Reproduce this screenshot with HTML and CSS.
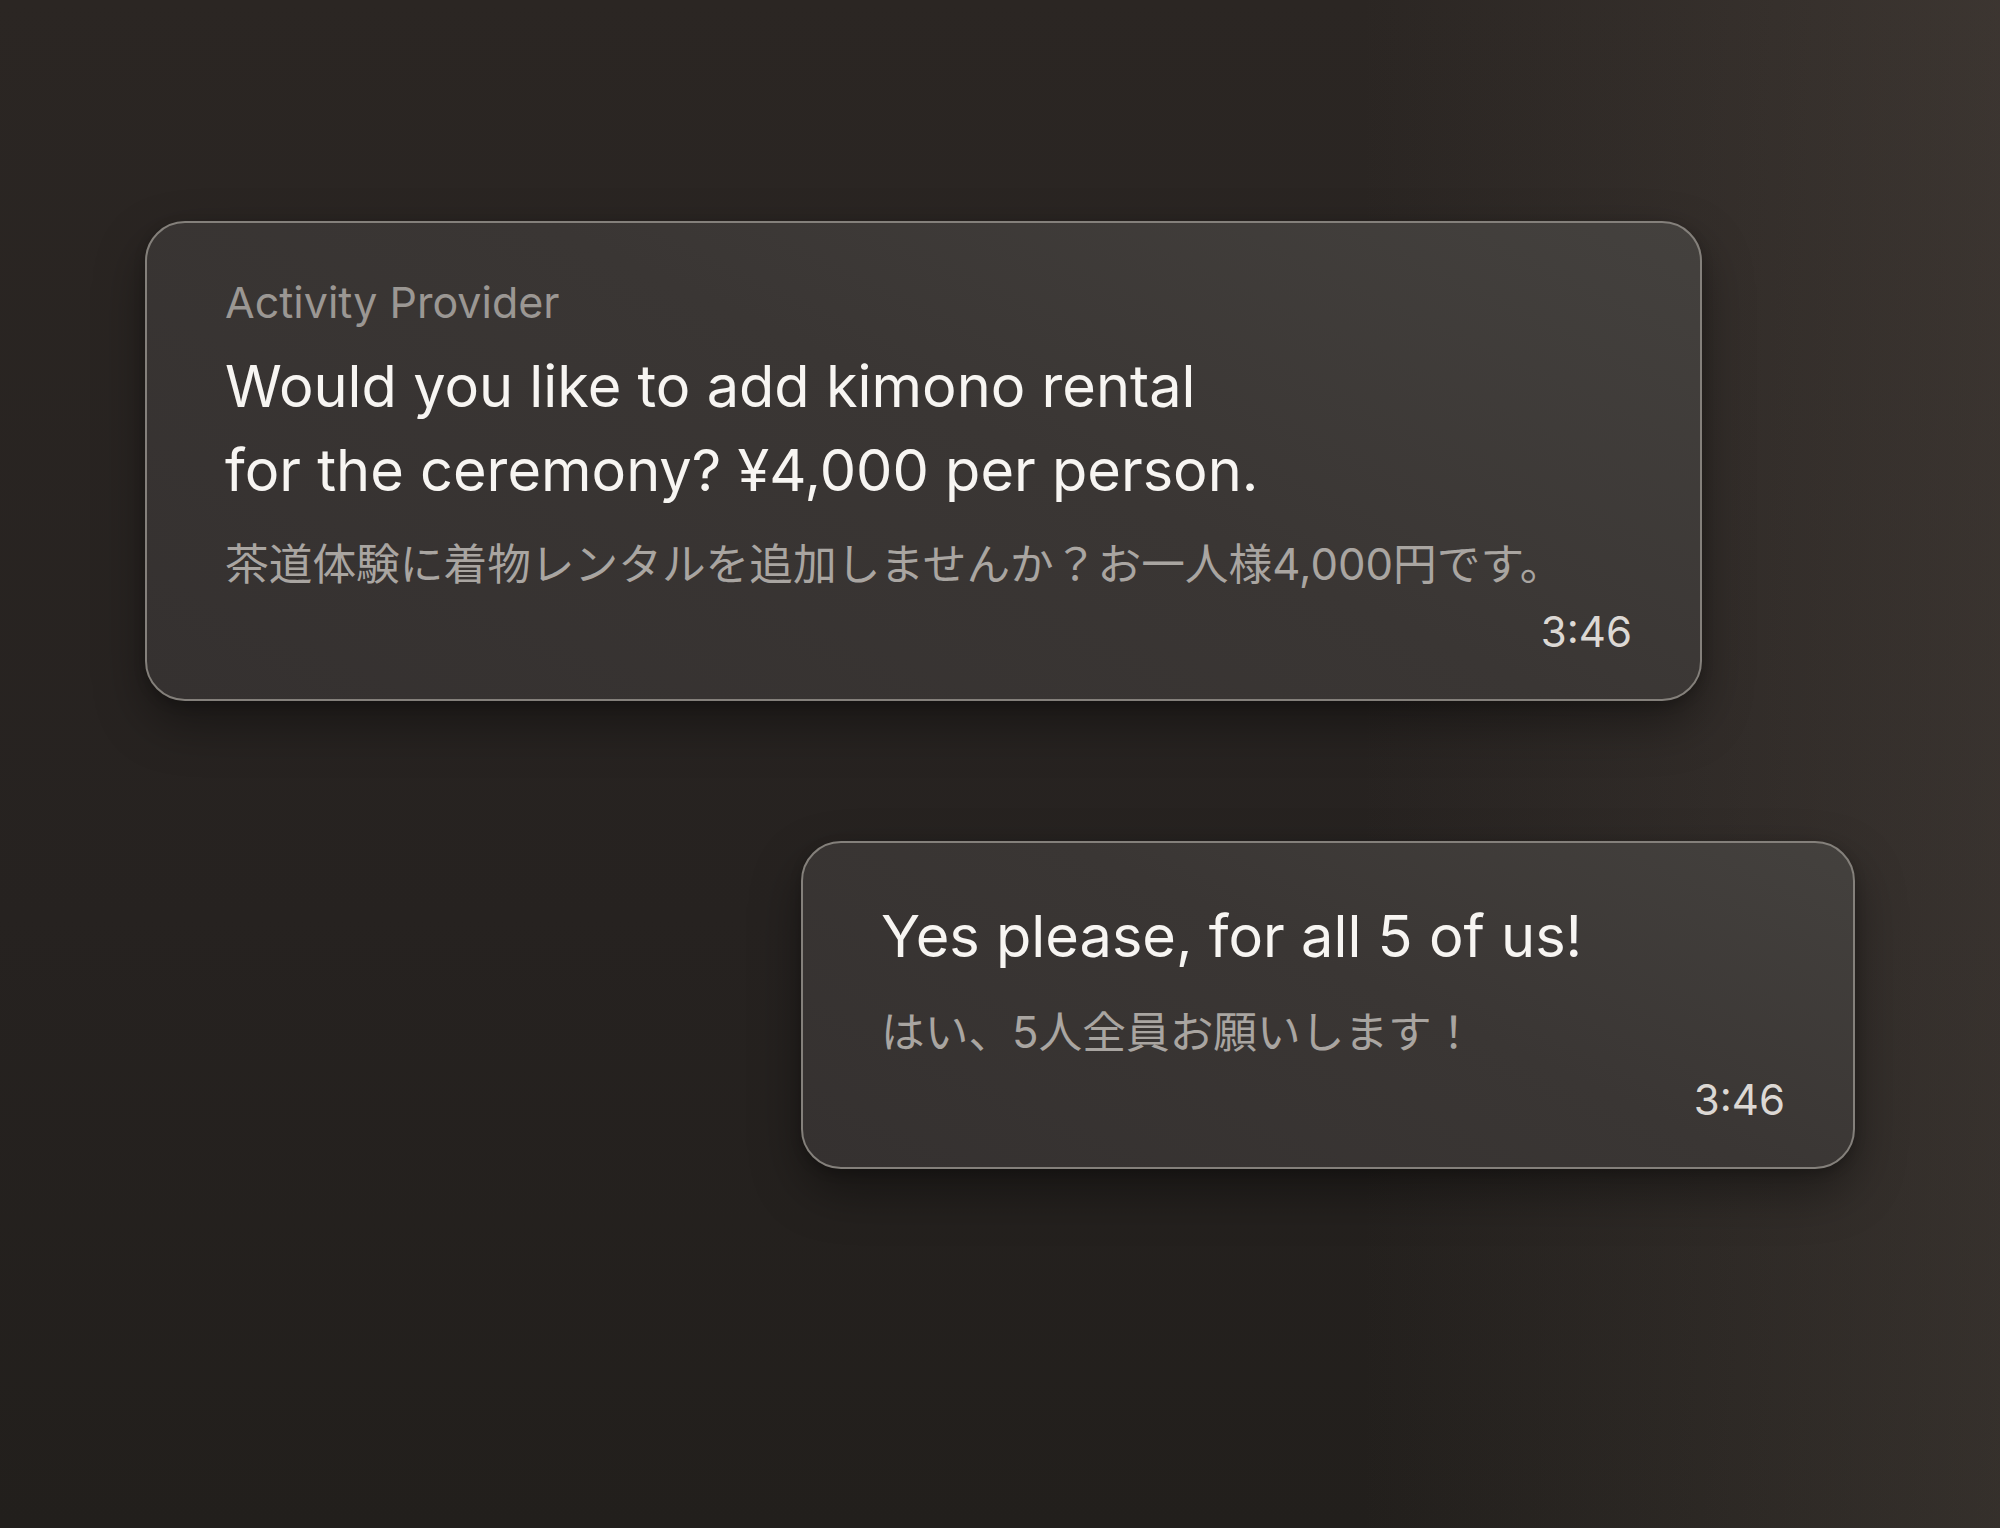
FILE: index.html
```html
<!DOCTYPE html>
<html lang="en">
<head>
<meta charset="utf-8">
<title>Chat</title>
<link rel="stylesheet" href="styles.css">
</head>
<body>
<main class="chat">
  <div class="bubble bubble--in">
    <div class="sender">Activity Provider</div>
    <p class="msg">Would you like to add kimono rental<br>for the ceremony? ¥4,000 per person.</p>
    <p class="trans" lang="ja">茶道体験に着物レンタルを追加しませんか？お一人様4,000円です。</p>
    <div class="time">3:46</div>
  </div>
  <div class="bubble bubble--out">
    <p class="msg">Yes please, for all 5 of us!</p>
    <p class="trans" lang="ja">はい、5人全員お願いします！</p>
    <div class="time">3:46</div>
  </div>
</main>
</body>
</html>
```

FILE: styles.css
```css
html, body {
  margin: 0;
  padding: 0;
}

body {
  min-height: 1528px;
  font-family: Inter, "Noto Sans CJK JP", sans-serif;
  background:
    linear-gradient(90deg, rgba(0,0,0,0) 68%, rgba(120,108,98,0.22) 100%),
    linear-gradient(180deg, #2b2623 0%, #262220 60%, #221f1c 100%);
}

.chat {
  display: flex;
  flex-direction: column;
  gap: 140px;
  padding: 221px 145px 0;
}

.bubble {
  box-sizing: border-box;
  border: 2px solid #84807b;
  border-radius: 40px;
  padding: 51px 68px 39px 78px;
  background: linear-gradient(205deg, #44413e 0%, #3a3634 45%, #353130 100%);
  box-shadow: 0 22px 50px rgba(0, 0, 0, 0.38), 0 4px 12px rgba(0, 0, 0, 0.2);
}

.bubble--in {
  width: 1557px;
  align-self: flex-start;
}

.bubble--out {
  width: 1054px;
  align-self: flex-end;
}

.sender {
  font-size: 43px;
  line-height: 56px;
  color: #9b9793;
  margin-bottom: 14px;
}

.msg {
  margin: 0;
  font-size: 57.7px;
  line-height: 84px;
  color: #f7f5f2;
}

.trans {
  margin: 20px 0 0;
  font-size: 43.7px;
  line-height: 66px;
  color: #a9a5a1;
}

.time {
  margin-top: 6px;
  font-size: 42px;
  line-height: 56px;
  text-align: right;
  color: #dcd8d4;
}

.bubble--out .trans {
  margin-top: 22px;
}
```
